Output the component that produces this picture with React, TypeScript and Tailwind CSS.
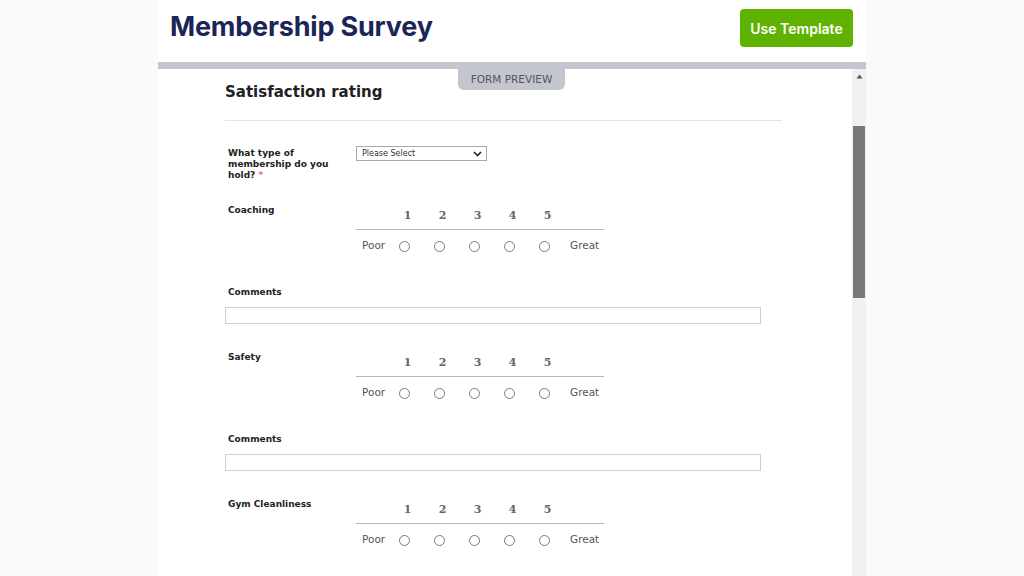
import React from 'react'

const sans = { fontFamily: '"DejaVu Sans", Verdana, sans-serif' }

function Label({ children }: { children: React.ReactNode }) {
  return (
    <div className="text-[9px] leading-[11px] font-bold text-[#222]" style={sans}>
      {children}
    </div>
  )
}

function Rating({ label }: { label: string }) {
  const nums = [1, 2, 3, 4, 5]
  return (
    <div className="flex">
      <div className="w-[131px] pl-[3px]">
        <Label>{label}</Label>
      </div>
      <div className="w-[248px]">
        <div className="flex h-[25px] border-b border-[#b8b8b8]">
          <div className="w-[31px]" />
          {nums.map(n => (
            <div
              key={n}
              className="w-[35px] pl-[6px] text-center text-[11px] leading-[22px] font-bold text-[#666]"
              style={{ fontFamily: '"DejaVu Serif", Georgia, serif' }}
            >
              {n}
            </div>
          ))}
        </div>
        <div className="flex h-[32px] items-center text-[10.5px] text-[#555]" style={sans}>
          <div className="w-[31px] pl-[6px]">Poor</div>
          {nums.map(n => (
            <div key={n} className="w-[35px] flex justify-center">
              <span className="block w-[11px] h-[11px] rounded-full border border-[#7a7a7a] bg-white" />
            </div>
          ))}
          <div className="pl-[8px]">Great</div>
        </div>
      </div>
    </div>
  )
}

function Comments() {
  return (
    <div className="mt-[25px]">
      <div className="pl-[3px]">
        <Label>Comments</Label>
      </div>
      <div className="mt-[9px] w-[536px] h-[17px] border border-[#cfcfcf] bg-white" />
    </div>
  )
}

export default function App() {
  return (
    <div className="w-[1024px] h-[576px] bg-[#fafafa] overflow-hidden">
      <div className="ml-[158px] w-[708px] h-full bg-white flex flex-col">
        {/* header */}
        <div className="h-[62px] flex items-start justify-between pl-[12px] pr-[13px]">
          <h1
            className="mt-[7px] text-[27px] leading-[40px] font-bold text-[#1b2558] tracking-[-0.2px]"
            style={{ fontFamily: 'Inter, "Open Sans", sans-serif' }}
          >
            Membership Survey
          </h1>
          <button
            className="mt-[9px] w-[113px] h-[38px] rounded-[4px] bg-[#5fb300] text-white text-[14px] font-semibold"
            style={{ fontFamily: 'Inter, "Open Sans", sans-serif' }}
          >
            Use Template
          </button>
        </div>
        <div className="h-[7px] bg-[#c3c6ce]" />

        <div className="relative flex flex-1 min-h-0">
          {/* form preview tab */}
          <div
            className="absolute left-[300px] top-0 w-[107px] h-[21px] rounded-b-[6px] bg-[#c3c6ce] flex items-center justify-center text-[10.5px] text-[#555]"
            style={sans}
          >
            FORM PREVIEW
          </div>

          <div className="flex-1 overflow-hidden pl-[67px] pt-[13px]">
            <h2 className="text-[15px] leading-[20px] font-bold text-[#222]" style={sans}>
              Satisfaction rating
            </h2>
            <div className="mt-[18px] w-[557px] border-t border-[#e4e4e4]" />

            <div className="mt-[25px] flex">
              <div className="w-[131px] pl-[3px] pt-[2px]">
                <Label>
                  What type of<br />membership do you<br />hold? <span className="text-[#f06a6a]">*</span>
                </Label>
              </div>
              <div
                className="w-[131px] h-[15px] border border-[#a9a9a9] bg-white flex items-center justify-between pl-[5px] pr-[4px] text-[8px] leading-none text-[#333]"
                style={sans}
              >
                <span>Please Select</span>
                <svg width="9" height="6" viewBox="0 0 9 6" fill="none" stroke="#222" strokeWidth="1.6">
                  <polyline points="1,1 4.5,4.5 8,1" />
                </svg>
              </div>
            </div>

            <div className="mt-[24px]">
              <Rating label="Coaching" />
            </div>
            <Comments />
            <div className="mt-[28px]">
              <Rating label="Safety" />
            </div>
            <Comments />
            <div className="mt-[28px]">
              <Rating label="Gym Cleanliness" />
            </div>
          </div>

          {/* scrollbar */}
          <div className="w-[14px] bg-[#f1f1f1] flex flex-col items-center">
            <svg className="mt-[5px]" width="7" height="5" viewBox="0 0 7 5">
              <polygon points="3.5,0.5 6.5,4.5 0.5,4.5" fill="#555" />
            </svg>
            <div className="mt-[47px] w-[12px] h-[172px] bg-[#797979]" />
          </div>
        </div>
      </div>
    </div>
  )
}
